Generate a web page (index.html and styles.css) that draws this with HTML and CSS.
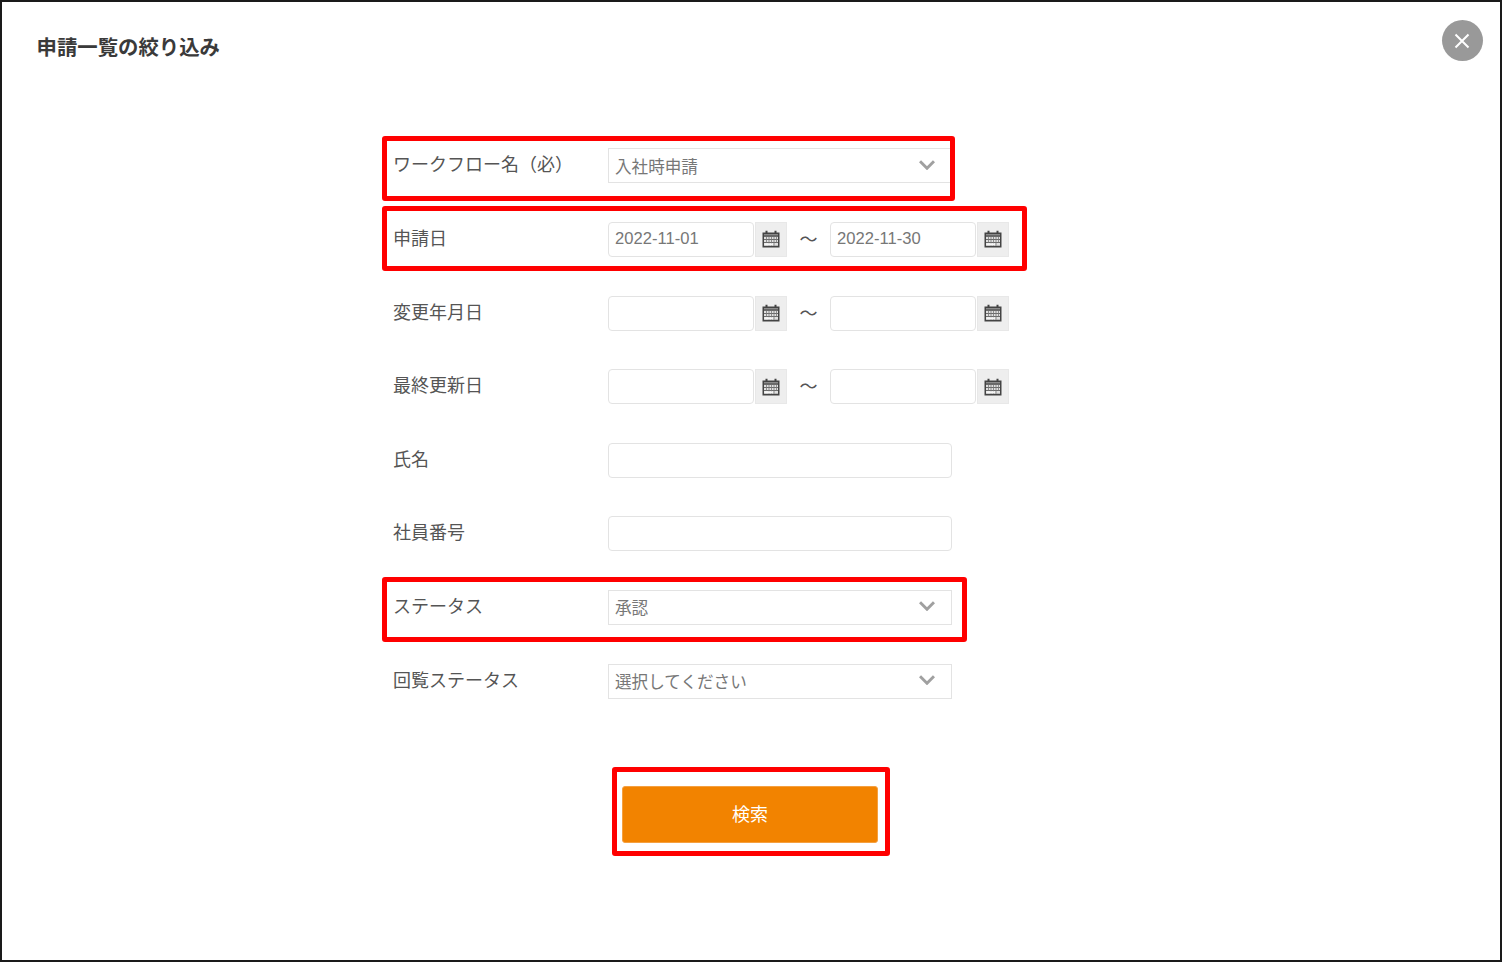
FILE: index.html
```html
<!DOCTYPE html>
<html lang="ja">
<head>
<meta charset="utf-8">
<title>申請一覧の絞り込み</title>
<link rel="stylesheet" href="styles.css">
</head>
<body>
<svg class="sprite" width="0" height="0" aria-hidden="true">
  <symbol id="cal" viewBox="0 0 18 18">
    <path fill="#444" d="M0.500 2.500h3V.8h2v1.700h7V.8h2v1.700h3v15h-17z"/>
    <path fill="#8a8a8a" d="M2 4h14v1.500H2z"/>
    <path fill="#e0e0e0" d="M2 6.800h14v2.300H2zM2 9.800h14v2.300H2zM2 12.800h14v3H2z"/>
    <path stroke="#777" stroke-width=".8" d="M4.500 6.800v6M7 6.800v9M9.500 6.800v9M12 6.800v9M14.500 6.800v6"/>
    <path fill="#f6f6f6" d="M2.500 13.300h8.500v2H2.500z"/>
  </symbol>
  <symbol id="chev" viewBox="0 0 16 10">
    <path fill="none" stroke="#a0a0a0" stroke-width="3" d="M1 1.200l7 7 7-7"/>
  </symbol>
</svg>
<main class="frame">
  <h1 class="title">申請一覧の絞り込み</h1>
  <button class="close" type="button" aria-label="閉じる">
    <svg width="16" height="16" viewBox="0 0 16 16"><path stroke="#fff" stroke-width="2" d="M1.500 1.500l13 13M14.500 1.500l-13 13"/></svg>
  </button>

  <form class="form">
    <div class="row">
      <span class="label">ワークフロー名（必）</span>
      <div class="select square"><span>入社時申請</span><svg class="chev"><use href="#chev"/></svg></div>
    </div>
    <div class="row">
      <span class="label">申請日</span>
      <div class="range">
        <div class="date"><div class="input">2022-11-01</div><span class="addon"><svg class="cal"><use href="#cal"/></svg></span></div>
        <span class="tilde">～</span>
        <div class="date"><div class="input">2022-11-30</div><span class="addon"><svg class="cal"><use href="#cal"/></svg></span></div>
      </div>
    </div>
    <div class="row">
      <span class="label">変更年月日</span>
      <div class="range">
        <div class="date"><div class="input"></div><span class="addon"><svg class="cal"><use href="#cal"/></svg></span></div>
        <span class="tilde">～</span>
        <div class="date"><div class="input"></div><span class="addon"><svg class="cal"><use href="#cal"/></svg></span></div>
      </div>
    </div>
    <div class="row">
      <span class="label">最終更新日</span>
      <div class="range">
        <div class="date"><div class="input"></div><span class="addon"><svg class="cal"><use href="#cal"/></svg></span></div>
        <span class="tilde">～</span>
        <div class="date"><div class="input"></div><span class="addon"><svg class="cal"><use href="#cal"/></svg></span></div>
      </div>
    </div>
    <div class="row">
      <span class="label">氏名</span>
      <div class="input wide"></div>
    </div>
    <div class="row">
      <span class="label">社員番号</span>
      <div class="input wide"></div>
    </div>
    <div class="row">
      <span class="label">ステータス</span>
      <div class="select"><span>承認</span><svg class="chev"><use href="#chev"/></svg></div>
    </div>
    <div class="row">
      <span class="label">回覧ステータス</span>
      <div class="select"><span>選択してください</span><svg class="chev"><use href="#chev"/></svg></div>
    </div>
    <div class="actions">
      <button class="search" type="button">検索</button>
    </div>
  </form>

  <div class="mark mark-a"></div>
  <div class="mark mark-b"></div>
  <div class="mark mark-c"></div>
  <div class="mark mark-d"></div>
</main>
</body>
</html>
```

FILE: styles.css
```css
* { box-sizing: border-box; }
html, body { margin: 0; padding: 0; background: #fff; }
body { width: 1502px; height: 962px; overflow: hidden; font-family: "Noto Sans CJK JP", "Liberation Sans", sans-serif; }
.sprite { position: absolute; }
.frame {
  position: relative;
  width: 1502px;
  height: 962px;
  border: 2px solid #1a1a1a;
  padding: 30px 0 0 34.500px;
}
.title {
  margin: 0;
  font-size: 20.400px;
  line-height: 28px;
  font-weight: 700;
  color: #3a3a3a;
}
.close {
  position: absolute;
  left: 1439.500px;
  top: 18px;
  width: 41px;
  height: 41px;
  border: 0;
  border-radius: 50%;
  background: #999;
  padding: 0;
  display: flex;
  align-items: center;
  justify-content: center;
}
.form {
  margin: 88.400px 0 0 356.500px;
  display: flex;
  flex-direction: column;
  gap: 38.600px;
}
.row {
  display: flex;
  align-items: center;
  height: 35px;
}
.label {
  width: 215px;
  font-size: 18px;
  line-height: 26px;
  color: #555;
  margin-top: -5px;
}
.select, .input {
  height: 100%;
  background: #fff;
  border: 1.500px solid #e3e3e3;
  font-size: 16.600px;
  color: #777;
  display: flex;
  align-items: center;
  padding: 0 6px;
  white-space: nowrap;
}
.select {
  width: 344px;
  justify-content: space-between;
  padding-right: 16px;
}
.input { border-radius: 4px; }
.input.wide { width: 344px; }
.chev { width: 16px; height: 10px; margin-top: -2px; }
.range { display: flex; align-items: center; height: 100%; }
.date { display: flex; height: 100%; }
.date .input { width: 146px; font-family: "Liberation Sans", sans-serif; font-size: 16.600px; padding-left: 6px; }
.addon {
  width: 32px;
  margin-left: 1px;
  background: #eee;
  border: 1px solid #e8e8e8;
  display: flex;
  align-items: center;
  justify-content: center;
}
.cal { width: 18px; height: 18px; }
.tilde {
  width: 43px;
  text-align: center;
  font-size: 18px;
  line-height: 26px;
  color: #555;
  margin-top: -3px;
}
.actions {
  display: flex;
  padding-left: 229px;
  margin-top: 49px;
}
.search {
  width: 256px;
  height: 57px;
  border: 1px solid #f5a040;
  border-radius: 3px;
  background: #f28300;
  color: #fff;
  font-family: inherit;
  font-size: 18px;
  padding: 0 0 3px;
}
.mark {
  position: absolute;
  border: 5.500px solid #ff0000;
  border-radius: 3px;
  pointer-events: none;
}
.mark-a { left: 380px; top: 134px; width: 573px; height: 65px; }
.mark-b { left: 380px; top: 204px; width: 645px; height: 65px; }
.mark-c { left: 380px; top: 575px; width: 585px; height: 65px; }
.mark-d { left: 610px; top: 765px; width: 278px; height: 89px; }
```
